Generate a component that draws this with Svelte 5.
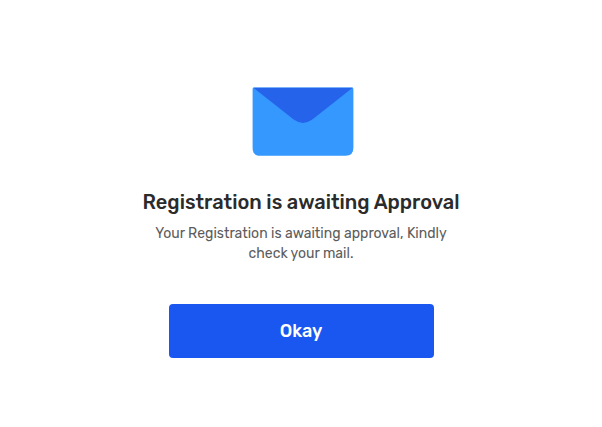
<script>
  let { onconfirm = () => {} } = $props();
</script>

<main>
  <svg class="mail" viewBox="0 0 108 70" aria-hidden="true">
    <path fill="#3498ff" d="M7 .6H105Q106.4 .6 106.4 2V61Q106.4 68.8 98.6 68.8H13.4Q5.6 68.8 5.6 61V2Q5.6 .6 7 .6Z" />
    <path fill="#2563eb" d="M6.4 .8H105.6L65 32.8Q56 39 47 32.8Z" />
  </svg>
  <h1>Registration is awaiting Approval</h1>
  <p>Your Registration is awaiting approval, Kindly check your mail.</p>
  <button type="button" onclick={onconfirm}>Okay</button>
</main>

<style>
  :global(body) {
    margin: 0;
    background: #fff;
  }

  main {
    box-sizing: border-box;
    min-height: 100vh;
    padding: 87px 24px 64px;
    display: flex;
    flex-direction: column;
    align-items: center;
    text-align: center;
    font-family: Rubik, Roboto, sans-serif;
  }

  .mail {
    width: 108px;
    height: 70px;
  }

  h1 {
    margin: 31px 0 0;
    color: #2b2b2b;
    font-size: 20px;
    line-height: 28px;
    font-weight: 500;
  }

  p {
    max-width: 306px;
    margin: 8px 0 0;
    color: #5c5c5c;
    font-size: 14px;
    line-height: 20px;
  }

  button {
    width: 100%;
    max-width: 265px;
    height: 54px;
    margin-top: 40px;
    border: 0;
    border-radius: 4px;
    background: #1a56f0;
    color: #fff;
    font: inherit;
    font-size: 18px;
    font-weight: 500;
    cursor: pointer;
  }
</style>
